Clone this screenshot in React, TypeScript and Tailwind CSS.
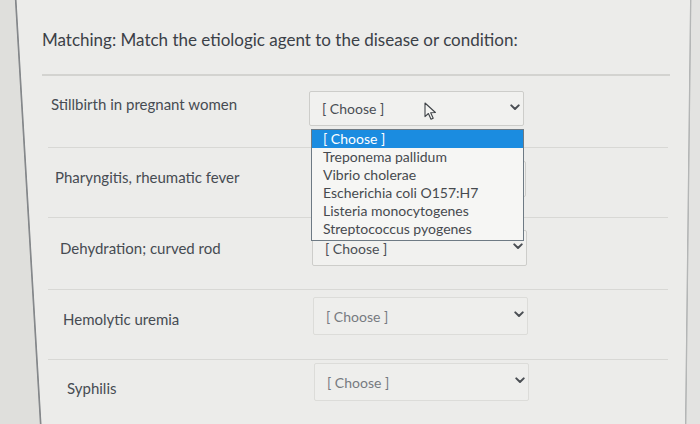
import React from "react";

const rows = [
  { label: "Stillbirth in pregnant women", h: "h-[72px]", pl: "pl-[3px]", pt: "pt-[18px]", sml: "ml-[3px]", spt: "pt-[15px]", sh: "h-[35px]", open: true, light: false, covered: false },
  { label: "Pharyngitis, rheumatic fever", h: "h-[70px]", pl: "pl-[7px]", pt: "pt-[19px]", sml: "ml-[5px]", spt: "pt-[13px]", sh: "h-[36px]", open: false, light: false, covered: true },
  { label: "Dehydration; curved rod", h: "h-[72px]", pl: "pl-[12px]", pt: "pt-[20px]", sml: "ml-[6px]", spt: "pt-[12px]", sh: "h-[36px]", open: false, light: false, covered: false },
  { label: "Hemolytic uremia", h: "h-[70px]", pl: "pl-[15px]", pt: "pt-[19px]", sml: "ml-[7px]", spt: "pt-[7px]", sh: "h-[38px]", open: false, light: true, covered: false },
  { label: "Syphilis", h: "h-[64px]", pl: "pl-[19px]", pt: "pt-[18px]", sml: "ml-[8px]", spt: "pt-[3px]", sh: "h-[38px]", open: false, light: true, covered: false },
];

const options = [
  "[ Choose ]",
  "Treponema pallidum",
  "Vibrio cholerae",
  "Escherichia coli O157:H7",
  "Listeria monocytogenes",
  "Streptococcus pyogenes",
];

function Chevron() {
  return (
    <svg width="10" height="7" viewBox="0 0 10 7" className="shrink-0 mb-[3px]">
      <path d="M1.3 1.4 L5 5 L8.7 1.4" fill="none" stroke="#4a4e53" strokeWidth="2" strokeLinecap="round" strokeLinejoin="round" />
    </svg>
  );
}

function Cursor() {
  return (
    <svg width="14" height="19" viewBox="0 0 14 19" className="absolute left-[114px] top-[10px]">
      <path d="M1 1 L1 14.6 L4.4 11.5 L7 17.3 L9.2 16.3 L6.7 10.7 L11.4 10.5 Z" fill="#f5f5f3" stroke="#3f4347" strokeWidth="1.1" strokeLinejoin="round" />
    </svg>
  );
}

export default function App() {
  return (
    <div
      className="w-[700px] h-[424px] overflow-hidden bg-[linear-gradient(90.68deg,transparent_689.5px,#b4b6b6_690.3px,#b4b6b6_691px,#e3e3e1_691.8px),linear-gradient(86.63deg,#dfdfdc_39.3px,#85888b_40.2px,#85888b_41px,#ececea_41.9px)]"
      style={{ fontFamily: "Lato, 'Open Sans', sans-serif" }}
    >
      <div className="pt-[27px] pl-[42px] w-[670px]">
        <h1 className="text-[17px] leading-[26px] text-[#3b4047] pb-[21px] border-b-2 border-[#d3d3d0]">
          Matching: Match the etiologic agent to the disease or condition:
        </h1>
      </div>
      <div className="ml-[48px] w-[620px]">
        {rows.map((r, i) => (
          <div key={i} className={`grid grid-cols-[258px_220px] ${r.h} ${i < 4 ? "border-b border-[#d8d8d5]" : ""}`}>
            <div className={`${r.pl} ${r.pt} text-[15px] leading-[20px] text-[#464b52]`}>{r.label}</div>
            <div className={`${r.sml} ${r.spt}`}>
              <div
                className={`relative ${r.sh} w-[215px] flex items-center justify-between pl-[12px] pr-[3px] rounded-[2px] border ${
                  r.light ? "bg-[#eeeeec] border-[#dcdcd9]" : "bg-[#f1f1ef] border-[#cdcdca]"
                }`}
              >
                <span className={`text-[14px] ${r.light ? "text-[#767a80]" : "text-[#4a4e54]"}`}>{r.covered ? "" : "[ Choose ]"}</span>
                <Chevron />
                {r.open && (
                  <>
                    <Cursor />
                    <div className="absolute left-[1px] top-[37px] w-[213px] bg-[#f6f6f4] border border-[#6e7a84] z-10 pb-[2px]">
                      {options.map((o, j) => (
                        <div
                          key={j}
                          className={`h-[18px] leading-[18px] text-[14px] pl-[11px] ${
                            j === 0 ? "bg-[#1b8ce0] text-white" : "text-[#464a4f]"
                          }`}
                        >
                          {o}
                        </div>
                      ))}
                    </div>
                  </>
                )}
              </div>
            </div>
          </div>
        ))}
      </div>
    </div>
  );
}
